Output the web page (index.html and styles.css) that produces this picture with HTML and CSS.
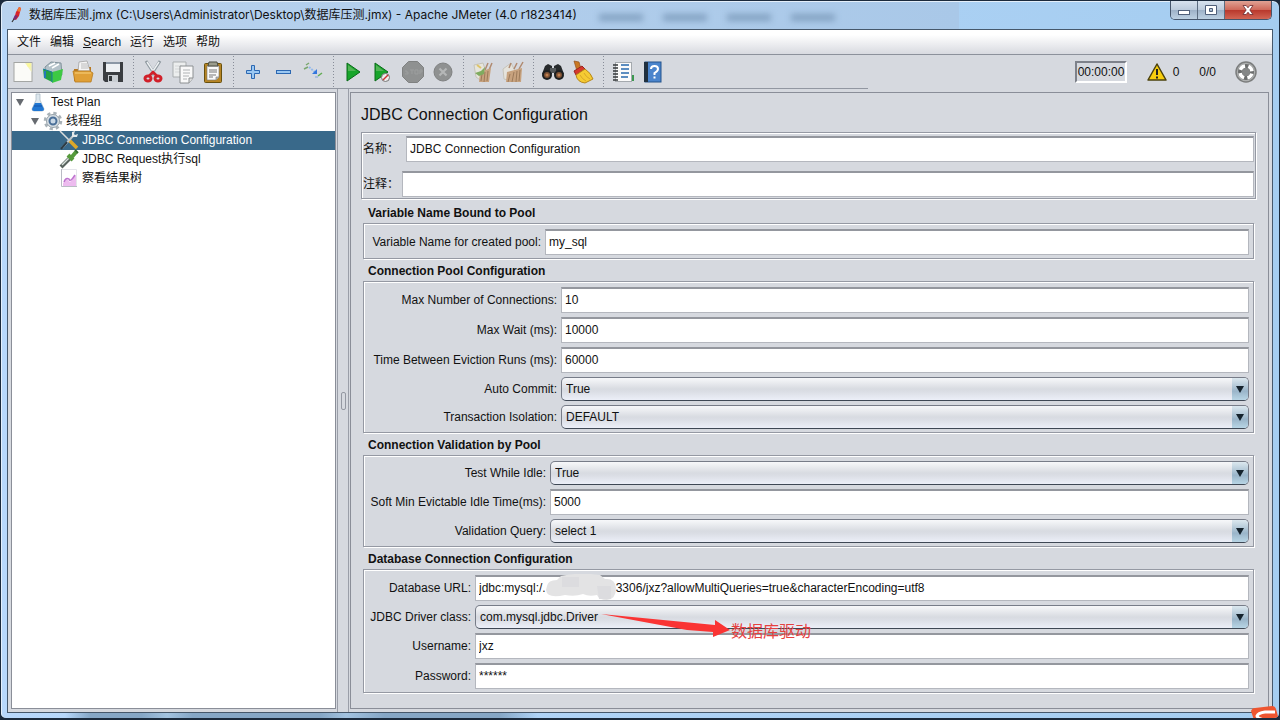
FILE: index.html
```html
<!DOCTYPE html>
<html lang="zh-CN">
<head>
<meta charset="utf-8">
<title>数据库压测.jmx - Apache JMeter</title>
<link rel="stylesheet" href="styles.css">
</head>
<body>
<div class="window">
  <header class="titlebar">
    <svg class="app-icon" viewBox="0 0 16 20"><path d="M11 2l2 1-2 8-3 4-2-1 2-7z" fill="#d8232a"/><path d="M11 2l2 1-1 4-3-1z" fill="#f0762e"/><path d="M7 10l3 1-3 4-2-1z" fill="#7b2a72"/><path d="M6 14l-2 3" stroke="#333" stroke-width="1.200"/></svg>
    <h1 class="title">数据库压测.jmx (C:\Users\Administrator\Desktop\数据库压测.jmx) - Apache JMeter (4.0 r1823414)</h1>
    <div class="glass-shadows" aria-hidden="true"><i></i><i></i><i></i><i></i></div>
    <div class="win-buttons">
      <button class="win-btn" aria-label="Minimize"><svg viewBox="0 0 14 12"><rect x="1.500" y="6.500" width="11" height="4" fill="#fff" stroke="#50607a"/></svg></button>
      <button class="win-btn" aria-label="Maximize"><svg viewBox="0 0 14 12"><path fill-rule="evenodd" d="M1.500 1.500h11v9h-11zM5.500 4.500v3h3v-3z" fill="#fff" stroke="#50607a"/></svg></button>
      <button class="win-btn close" aria-label="Close"><svg viewBox="0 0 14 12"><path d="M2 1.500h3.200L7 3.800l1.800-2.300H12L8.800 6l3.200 4.500H8.800L7 8.200l-1.800 2.300H2L5.200 6z" fill="#fff" stroke="#6b2a2e" stroke-width=".8"/></svg></button>
    </div>
  </header>

  <main class="client">
    <nav class="menu">
      <button>文件</button><button>编辑</button><button><u>S</u>earch</button><button>运行</button><button>选项</button><button>帮助</button>
    </nav>

    <div class="toolbar">
      <div class="tools">
        <button aria-label="New"><svg viewBox="0 0 24 24"><rect x="3" y="2.500" width="18" height="19" fill="#fbfbf8" stroke="#a4a6a4"/><path d="M14 3h6.500v9z" fill="#f4f3b4"/><circle cx="18" cy="5" r="2" fill="#fbf89a"/></svg></button>
        <button aria-label="Templates"><svg viewBox="0 0 24 24"><path d="M4 7l6-5 10 1 1 12-8 6-8-4z" fill="#b4c2c9" stroke="#82939c"/><path d="M8 6l6-3M11 8l7-4" stroke="#fff" stroke-width="1.500"/><path d="M2 9l9 3v10l-8-4z" fill="#27a343"/><path d="M11 12l4-1 7-2-2 11-9 3z" fill="#3dc943"/><path d="M2 9l9 3v10" fill="none" stroke="#187c9c"/><path d="M4 11v7" stroke="#2578b8" stroke-width="2"/></svg></button>
        <button aria-label="Open"><svg viewBox="0 0 24 24"><path d="M3 9h4l1-2h12v14H3z" fill="#b87820"/><path d="M8 2l8-1 3 10H7z" fill="#f5f5f5" stroke="#999" stroke-width=".7"/><path d="M10 4h6M10 6h7M10 8h7" stroke="#bbb"/><path d="M2 11h17l3 2-2 9H4z" fill="#e0a037" stroke="#b77b20" stroke-width=".8"/><path d="M4 13h16" stroke="#f8d27e"/></svg></button>
        <button aria-label="Save"><svg viewBox="0 0 24 24"><path d="M2 2h20v20H4l-2-2z" fill="#3a3d41"/><rect x="5" y="2" width="14" height="10" fill="#eef1f4"/><path d="M5 3h14" stroke="#8b97a5" stroke-width="2"/><rect x="7" y="15" width="10" height="7" fill="#c9ced3"/><rect x="8" y="16" width="3" height="5" fill="#32363a"/></svg></button>
        <span class="sep"></span>
        <button aria-label="Cut"><svg viewBox="0 0 24 24"><path d="M5 1l9 14M19 1l-9 14" stroke="#8e989f" stroke-width="3"/><path d="M6 2l8 12M18 2l-8 12" stroke="#edf0f2" stroke-width="1.500"/><ellipse cx="7" cy="18.500" rx="3" ry="2.500" fill="none" stroke="#d1202a" stroke-width="3"/><ellipse cx="17" cy="18.500" rx="3" ry="2.500" fill="none" stroke="#d1202a" stroke-width="3"/><path d="M8 16l4-4 4 4" fill="none" stroke="#d1202a" stroke-width="2.500"/></svg></button>
        <button aria-label="Copy"><svg viewBox="0 0 24 24"><path d="M2 2h13v15H2z" fill="#eceeee" stroke="#a9adaf"/><path d="M4 6h7M4 9h7M4 12h7" stroke="#d4d6d7"/><path d="M9 6h13v12l-4 5H9z" fill="#f9f9f9" stroke="#8c9092"/><path d="M12 10h7M12 13h7M12 16h6M12 19h4" stroke="#afb2b4"/><path d="M22 18h-4v5" fill="#ddd" stroke="#8c9092"/></svg></button>
        <button aria-label="Paste"><svg viewBox="0 0 24 24"><rect x="3.500" y="3.500" width="17" height="19" rx="1" fill="#b78524" stroke="#67500f"/><path d="M6 6h12v11l-3 3H6z" fill="#fafafa" stroke="#777" stroke-width=".6"/><path d="M8 10h8M8 12h8M8 15h7M8 17h4" stroke="#777"/><path d="M8 2h8l1 4H7z" fill="#9a9c8c" stroke="#4b4c42"/><path d="M18 17h-3v3" fill="#bbb" stroke="#777" stroke-width=".6"/></svg></button>
        <span class="sep"></span>
        <button aria-label="Expand All"><svg viewBox="0 0 24 24"><path d="M10.500 5.500h3v5h5v3h-5v5h-3v-5h-5v-3h5z" fill="#9bc8f2" stroke="#2c68b2"/></svg></button>
        <button aria-label="Collapse All"><svg viewBox="0 0 24 24"><rect x="5.500" y="10.500" width="14" height="3" fill="#9bc8f2" stroke="#2c68b2"/></svg></button>
        <button aria-label="Toggle"><svg viewBox="0 0 24 24"><path d="M5 5l3-2M3 9l4-2" stroke="#7aa870" stroke-width="1.500"/><path d="M8 7l7 6" stroke="#93b9ec" stroke-width="2" stroke-dasharray="2 1"/><path d="M11 14h5V9z" fill="#3376dd"/><path d="M17 16l4-3" stroke="#63ac55" stroke-width="1.500"/><path d="M14 17h3" stroke="#9ab5dc" stroke-width="1.500"/></svg></button>
        <span class="sep"></span>
        <button aria-label="Start"><svg viewBox="0 0 24 24"><path d="M6 3l13 9-13 9z" fill="#18a52b" stroke="#0a6b19"/><path d="M7 5l8 6H7z" fill="#52b555"/></svg></button>
        <button aria-label="Start no pauses"><svg viewBox="0 0 24 24"><path d="M4 3l13 9-13 9z" fill="#18a52b" stroke="#0a6b19"/><path d="M5 5l8 6H5z" fill="#52b555"/><circle cx="14.500" cy="17.500" r="4" fill="#eee" stroke="#777"/><path d="M12 20l5-5" stroke="#c33" stroke-width="1.500"/></svg></button>
        <button aria-label="Stop" disabled><svg viewBox="0 0 24 24"><path d="M7.500 1.500h9l6 6v9l-6 6h-9l-6-6v-9z" fill="#8f9191" stroke="#7f8181"/><path d="M5 10v2h2v2H4M9 10h4M11 10v4M14 10h3v4h-3zM19 14v-4h2v2h-2" fill="none" stroke="#9c9e9e"/></svg></button>
        <button aria-label="Shutdown" disabled><svg viewBox="0 0 24 24"><circle cx="12" cy="12" r="9" fill="#8f9191" stroke="#808282"/><path d="M8.500 8.500l7 7M15.500 8.500l-7 7" stroke="#b5b7b7" stroke-width="2.200"/></svg></button>
        <span class="sep"></span>
        <button aria-label="Clear"><svg viewBox="0 0 24 24"><path d="M3 5l9-2 3 9-3 10-7-5z" fill="#e6e5dc" stroke="#c6c3b8"/><path d="M14 10l3-7M18 10l3-7" stroke="#b08a70" stroke-width="1.500"/><path d="M9 12l11-4-2 14H8z" fill="#c7a27e"/><path d="M11 14l-1 7M14 12l-1 10M17 11l-1 10" stroke="#9c7a5a"/><path d="M4 13l6-2 4-4-1 7-5 2z" fill="#7fab5f"/><path d="M6 5l4 3" stroke="#dfc469" stroke-width="2"/></svg></button>
        <button aria-label="Clear All"><svg viewBox="0 0 24 24"><path d="M2 9l8-6 4 8-3 10-8-2z" fill="#e5e3dc" stroke="#c6c3b8"/><path d="M13 9l3-6M18 9l4-7M8 8l2-5" stroke="#b08a70" stroke-width="1.500"/><path d="M6 12l15-4-1 14H5z" fill="#c7a27e"/><path d="M9 14l-2 8M13 12l-2 10M16 11l-1 11M19 10l-1 11" stroke="#9c7a5a"/></svg></button>
        <span class="sep"></span>
        <button aria-label="Search"><svg viewBox="0 0 24 24"><path d="M4 6l3-2 4 2v8H1zM20 6l-3-2-4 2v8h10z" fill="#272a2c"/><rect x="9" y="8" width="6" height="5" fill="#55595b"/><circle cx="6" cy="15" r="5" fill="#1d2022"/><circle cx="18" cy="15" r="5" fill="#1d2022"/><circle cx="6" cy="15" r="3" fill="#7e5235"/><circle cx="18" cy="15" r="3" fill="#7e5235"/><circle cx="6" cy="15" r="1.500" fill="#bf8050"/><circle cx="18" cy="15" r="1.500" fill="#bf8050"/></svg></button>
        <button aria-label="Reset Search"><svg viewBox="0 0 24 24"><path d="M3 1l5 1 2 7-4 2z" fill="#c97824" stroke="#93501b" stroke-width=".7"/><path d="M3 11l8-5 3 3-9 6z" fill="#d53a2c" stroke="#922"/><path d="M5 15l9-6q6 4 8 10l-8 4q-8-1-9-8z" fill="#f5cb32" stroke="#b6861c"/><path d="M9 15q2 4 6 6M13 13q2 4 6 6" fill="none" stroke="#d8a62a"/></svg></button>
        <span class="sep"></span>
        <button aria-label="Function Helper"><svg viewBox="0 0 24 24"><path d="M17 15h6v6h-6z" fill="#3c9850"/><rect x="4.500" y="2.500" width="16" height="19" fill="#fafafa" stroke="#a4a9ae"/><path d="M10 5h8M10 9h8M10 13h8M10 17h7" stroke="#296aad" stroke-width="1.500"/><path d="M2 5h5M2 8h5M2 11h5M2 14h5M2 17h5M2 20h5" stroke="#34383b" stroke-width="1.300"/></svg></button>
        <button aria-label="Help"><svg viewBox="0 0 24 24"><rect x="4" y="2" width="16" height="20" fill="#4a84cc" stroke="#24558d"/><path d="M3 2h4v20H3z" fill="#20303f"/><path d="M10 9q0-3 3.500-3t3.500 3q0 2-3.500 4v2M13.500 16.500v2" fill="none" stroke="#fff" stroke-width="2"/></svg></button>
      </div>
      <div class="status">
        <output class="timer">00:00:00</output>
        <button class="warn"><svg viewBox="0 0 20 18"><path d="M10 1l9 16H1z" fill="#f7cd0d" stroke="#4b410d" stroke-linejoin="round" stroke-width="1.500"/><path d="M10 6v6M10 13.500v2" stroke="#222" stroke-width="2"/></svg><span>0</span></button>
        <span class="threads">0/0</span>
        <svg class="remote" viewBox="0 0 24 24"><circle cx="12" cy="12" r="10" fill="#aeb0b0" stroke="#7b7d7d" stroke-width="1.500"/><circle cx="12" cy="12" r="8" fill="#6c6e6e"/><circle cx="12" cy="12" r="6" fill="none" stroke="#fff" stroke-width="3.500" stroke-dasharray="6 3.425" stroke-dashoffset="-1.700"/><circle cx="12" cy="12" r="4" fill="#858787"/></svg>
      </div>
    </div>

    <div class="split">
      <aside class="tree-pane">
        <ul class="tree">
          <li class="node"><span class="twisty"></span><svg viewBox="0 0 20 20"><path d="M8 2h4v6l4 9q0 2-2 2H6q-2 0-2-2l4-9z" fill="#dde7ee" stroke="#a4b4c0" stroke-width=".7"/><path d="M7 11h6l3 6q0 2-2 2H6q-2 0-2-2z" fill="#2277d2"/><path d="M6 14h8" stroke="#1554aa"/></svg>Test Plan</li>
          <li class="node level1"><span class="twisty"></span><svg viewBox="0 0 20 20"><circle cx="10" cy="10" r="8" fill="none" stroke="#a9b2b8" stroke-width="2.500" stroke-dasharray="3.300 3"/><circle cx="10" cy="10" r="6.500" fill="#d8dfe4" stroke="#95a1a9"/><circle cx="10" cy="10" r="3.500" fill="#c9d8e6" stroke="#4a6f98" stroke-width="2"/></svg>线程组</li>
          <li class="node level2 selected"><svg viewBox="0 0 20 20"><path d="M1 1l9 9" stroke="#dadddd" stroke-width="1.500"/><path d="M10 10l8 8" stroke="#dda829" stroke-width="3.500"/><path d="M3 18L14 6" stroke="#bfc6ca" stroke-width="2"/><path d="M13 2v5h5l1-3-3 1-1-1 1-3z" fill="#e5e9eb"/><path d="M2 19l6-7" stroke="#2c3c46" stroke-width="2"/></svg>JDBC Connection Configuration</li>
          <li class="node level2"><svg viewBox="0 0 20 20"><path d="M2 18L12 8" stroke="#59635f" stroke-width="4"/><path d="M3 16l9-9" stroke="#dce4df" stroke-width="1.500"/><path d="M9 6l5 5M12 9l5-6" stroke="#569b3c" stroke-width="4"/><path d="M16 1l3 3" stroke="#326d2b" stroke-width="2"/></svg>JDBC Request执行sql</li>
          <li class="node level2"><svg viewBox="0 0 20 20"><path d="M2.500 1v17.500H18" fill="none" stroke="#b9bbc4"/><path d="M3 1.500h14.500V18" fill="none" stroke="#e4e5ea"/><path d="M4 18v-3l4-4 3 3 6-7v11z" fill="#edbbef"/><path d="M5 14q2-5 5-3 1 4 6-4" fill="none" stroke="#bd73ce" stroke-width="1.500"/></svg>察看结果树</li>
        </ul>
      </aside>
      <div class="divider"><i class="grip"></i></div>
      <section class="editor">
        <h2>JDBC Connection Configuration</h2>
        <div class="group names">
          <div class="name-row"><label for="name">名称：</label><input id="name" value="JDBC Connection Configuration"></div>
          <div class="name-row comment"><label for="comment">注释：</label><input id="comment"></div>
        </div>

        <fieldset class="section"><legend>Variable Name Bound to Pool</legend>
          <div class="group form cols-variable">
            <label for="pool">Variable Name for created pool:</label><input id="pool" value="my_sql">
          </div>
        </fieldset>
        <fieldset class="section"><legend>Connection Pool Configuration</legend>
          <div class="group form cols-pool">
            <label for="max">Max Number of Connections:</label><input id="max" value="10">
            <label for="wait">Max Wait (ms):</label><input id="wait" value="10000">
            <label for="evict">Time Between Eviction Runs (ms):</label><input id="evict" value="60000">
            <label for="auto">Auto Commit:</label><span class="combo"><select id="auto"><option>True</option></select></span>
            <label for="iso">Transaction Isolation:</label><span class="combo"><select id="iso"><option>DEFAULT</option></select></span>
          </div>
        </fieldset>
        <fieldset class="section"><legend>Connection Validation by Pool</legend>
          <div class="group form cols-valid">
            <label for="idle">Test While Idle:</label><span class="combo"><select id="idle"><option>True</option></select></span>
            <label for="soft">Soft Min Evictable Idle Time(ms):</label><input id="soft" value="5000">
            <label for="query">Validation Query:</label><span class="combo"><select id="query"><option>select 1</option></select></span>
          </div>
        </fieldset>
        <fieldset class="section"><legend>Database Connection Configuration</legend>
          <div class="group form cols-db">
            <label for="url">Database URL:</label>
            <span class="cell"><input id="url" value="jdbc:mysql:/.&nbsp;&nbsp;&nbsp;&nbsp;&nbsp;&nbsp;&nbsp;&nbsp;&nbsp;&nbsp;&nbsp;&nbsp;&nbsp;&nbsp;&nbsp;&nbsp;&nbsp;&nbsp;&nbsp;&nbsp;&nbsp;3306/jxz?allowMultiQueries=true&amp;characterEncoding=utf8">
              <svg class="mask" viewBox="0 0 72 28"><path d="M2 12Q3 6 12 6L16 2Q34-2 55 1L60 5Q70 4 71 14Q71 25 62 26Q54 26 52 21Q44 23 38 20Q30 23 20 21Q2 25 1 16z" fill="#e3e3e4"/><path d="M17 3h17v10H17zM52 12h14v13H54z" fill="#dcdcdf"/></svg></span>
            <label for="driver">JDBC Driver class:</label>
            <span class="combo"><select id="driver"><option>com.mysql.jdbc.Driver</option></select>
              <span class="note"><svg viewBox="0 0 130 28"><path d="M0 3L114 14V9L129 19 112 26V21L86 19z" fill="#fa3434"/></svg><span>数据库驱动</span></span></span>
            <label for="user">Username:</label><input id="user" value="jxz">
            <label for="pass">Password:</label><input id="pass" value="******">
          </div>
        </fieldset>
      </section>
    </div>
  </main>
  <svg class="ime" viewBox="0 0 28 14" aria-hidden="true"><path d="M0 5Q1 2 4 2L21 0Q24 0 25 3L28 14H3z" fill="#ee5530"/><path d="M24 6H14Q7 7 6 10Q7 13 14 14H24" fill="none" stroke="#fff" stroke-width="3"/></svg>
</div>
</body>
</html>
```
FILE: styles.css
```css
* { box-sizing: border-box; }
body {
  margin: 0;
  background: #1b2a3c;
  color: #111;
  font: 12px/16px "Liberation Sans", "Noto Sans CJK SC", sans-serif;
}
button, input, select { font: inherit; color: inherit; }
button { border: 0; padding: 0; background: none; }
.window {
  position: relative;
  display: flex;
  flex-direction: column;
  min-height: 100vh;
  padding: 0 6px 5px;
  border: 1px solid #1b2a3c;
  border-width: 1px 1px 2px 1px;
  border-radius: 7px 7px 6px 6px;
  overflow: hidden;
  background:
    linear-gradient(90deg, #b9d3ef 0, #a9c8e8 75%, transparent 75%) top / 100% 28px no-repeat,
    linear-gradient(90deg, transparent 5%, #86a7c6 7% 11%, #a3c3e0 13%, #86a7c6 15% 25%, #a3c3e0 27%, #86a7c6 30% 39%, transparent 42%) bottom / 100% 5px no-repeat,
    linear-gradient(90deg, #b8d8fb, #a5cdf0);
  box-shadow: inset 0 1px #e4effa, inset 1px 0 #e4effa;
}

.titlebar { display: flex; height: 28px; align-items: flex-start; }
.app-icon { width: 16px; height: 20px; margin: 4px 5px 0 1px; }
.title {
  margin: 5px 0 0;
  font: 12px/18px Inter, "Noto Sans CJK SC", sans-serif;
  white-space: nowrap;
}
.glass-shadows { display: flex; flex: 1; gap: 20px; padding: 13px 0 0 22px; filter: blur(3px); }
.glass-shadows i { width: 44px; height: 7px; background: #83a2c2; }
.win-buttons { display: flex; margin-right: 1px; border: 1px solid #45556b; border-top: 0; border-radius: 0 0 5px 5px; overflow: hidden; }
.win-btn {
  display: grid;
  place-items: center;
  width: 27px;
  height: 18px;
  border-right: 1px solid #5b6c80;
  background: linear-gradient(#d7e2ee, #bccbdc 48%, #9db1c7 50%, #bcd0e2);
}
.win-btn svg { width: 14px; height: 12px; }
.win-btn.close { width: 46px; border: 0; background: linear-gradient(#e0a294, #cf6a5b 48%, #b8372b 50%, #d26554); }

.client { display: flex; flex: 1; flex-direction: column; border: 1px solid #46586b; background: #d6d9df; }
.menu { display: flex; gap: 9px; height: 25px; padding: 0 9px; border-bottom: 1px solid #8c919b; background: linear-gradient(#fff 20%, #d8dae0); }
.menu button { line-height: 24px; }

.toolbar { display: flex; justify-content: space-between; height: 34px; }
.tools { display: flex; align-items: center; width: 860px; border-bottom: 1px solid #9297a1; }
.tools button { display: grid; place-items: center; width: 30px; height: 30px; }
.tools svg { width: 24px; height: 24px; }
.sep { width: 10px; height: 32px; background: linear-gradient(#888d98, #888d98) 5px 0 / 1px 100% no-repeat; mask: repeating-linear-gradient(#000 0 1px, transparent 1px 3px); }
.status { display: flex; align-items: center; padding-right: 14px; }
.timer { width: 52px; height: 22px; padding: 0 1px; border: 2px solid #777b84; border-color: #7d818a #fff #fff #7d818a; line-height: 18px; }
.warn { display: flex; align-items: center; gap: 6px; margin-left: 20px; }
.warn svg { width: 20px; height: 18px; }
.threads { margin-left: 20px; }
.remote { width: 24px; height: 24px; margin-left: 18px; }

.split { display: flex; flex: 1; padding: 3px; }
.tree-pane { width: 325px; border: 1px solid #8a8e98; background: #fff; }
.tree { margin: 0; padding: 0; list-style: none; }
.node { display: flex; align-items: center; height: 19px; padding: 0 0 1px 4px; }
.node svg { flex: none; width: 20px; height: 20px; margin-right: 3px; }
.twisty { width: 8px; margin-right: 4px; border: solid transparent; border-width: 7px 4px 0; border-top-color: #666a70; }
.level1 { padding-left: 19px; }
.level2 { padding-left: 47px; }
.selected { color: #fff; background: #39698a; }
.divider { display: flex; align-items: center; justify-content: center; width: 12px; margin: -3px 1px; border: solid #9a9ea8; border-width: 0 1px; }
.grip { width: 5px; height: 18px; border: 1px solid #9498a2; border-radius: 2px; }

.editor { flex: 1; min-width: 0; padding: 10px 12px 14px 10px; border: 1px solid #8a8e98; }
h2 { margin: 0 0 5px; font-size: 16px; line-height: 24px; font-weight: 400; }
.group { border: 1px solid #9599a3; box-shadow: 1px 1px #fff, inset 1px 1px #fff; }
.names { display: grid; gap: 9px; margin-bottom: 2px; padding: 3px 1px 1px; }
.name-row { display: grid; grid-template-columns: 43px 1fr; align-items: center; }
.comment { grid-template-columns: 39px 1fr; }
.section { min-width: 0; margin: 0 2px; padding: 0; border: 0; }
legend { padding: 4px 5px 2px; font-weight: 700; }
.form { display: grid; align-items: center; gap: 4px; padding: 5px 4px 3px; }
.form label { text-align: right; white-space: nowrap; }
.cols-variable { grid-template-columns: 173px 1fr; }
.cols-pool { grid-template-columns: 189px 1fr; }
.cols-valid { grid-template-columns: 178px 1fr; }
.cols-db { grid-template-columns: 103px 1fr; }
input {
  width: 100%;
  min-width: 0;
  height: 26px;
  padding: 0 3px 1px;
  border: 1px solid #b4b7be;
  border-top: 2px solid #94979e;
  border-radius: 0;
  background: #fff;
}
.combo { position: relative; height: 24px; }
select {
  appearance: none;
  width: 100%;
  height: 24px;
  padding: 0 4px;
  border: 1px solid #777c88;
  border-bottom-color: #3f4855;
  border-radius: 5px;
  background: linear-gradient(#f7f8fa, #d8dbe1 50%, #dadde4 60%, #eceff8);
}
.combo::before {
  content: "";
  position: absolute;
  right: 1px;
  top: 1px;
  bottom: 1px;
  width: 16px;
  border-radius: 0 4px 4px 0;
  background: linear-gradient(#dce8ef, #9ab5c9 60%, #b8d5e5);
}
.combo::after {
  content: "";
  position: absolute;
  right: 5px;
  top: 9px;
  border: solid transparent;
  border-width: 7px 4px 0;
  border-top-color: #15232d;
}
.cell { position: relative; }
.cell input { display: block; }
.mask { position: absolute; left: 69px; top: -1px; width: 74px; height: 28px; }
.note { position: absolute; left: 126px; top: 1px; display: flex; align-items: center; color: #e5413f; font-size: 16px; line-height: 24px; white-space: nowrap; pointer-events: none; }
.note svg { width: 130px; height: 28px; }
.note span { padding-top: 14px; }
.ime { position: absolute; right: 0; bottom: -2px; width: 28px; height: 14px; }
```
